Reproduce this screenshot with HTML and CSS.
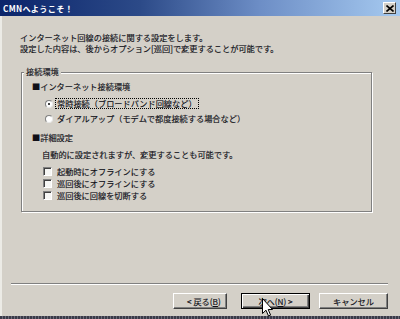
FILE: index.html
```html
<!DOCTYPE html>
<html lang="ja">
<head>
<meta charset="utf-8">
<title>CMNへようこそ！</title>
<link rel="stylesheet" href="styles.css">
</head>
<body>
<div class="window">
  <div class="titlebar">
    <span class="title">CMNへようこそ！</span>
    <span class="close"><svg width="8" height="7" viewBox="0 0 8 7"><path d="M0.5 0.5 L7.5 6.5 M7.5 0.5 L0.5 6.5" stroke="#000" stroke-width="1.6"/></svg></span>
  </div>
  <div class="intro">
    <p>インターネット回線の接続に関する設定をします。</p>
    <p>設定した内容は、後からオプション[巡回]で変更することが可能です。</p>
  </div>
  <div class="group">
    <div class="group-title">接続環境</div>
    <div class="heading">■インターネット接続環境</div>
    <div class="radios">
      <div class="option"><span class="radio checked"></span><span class="label focus">常時接続（ブロードバンド回線など）</span></div>
      <div class="option"><span class="radio"></span><span class="label">ダイアルアップ（モデムで都度接続する場合など）</span></div>
    </div>
    <div class="heading heading-2">■詳細設定</div>
    <div class="desc">自動的に設定されますが、変更することも可能です。</div>
    <div class="checks">
      <div class="check-row"><span class="checkbox"></span><span class="label">起動時にオフラインにする</span></div>
      <div class="check-row"><span class="checkbox"></span><span class="label">巡回後にオフラインにする</span></div>
      <div class="check-row"><span class="checkbox"></span><span class="label">巡回後に回線を切断する</span></div>
    </div>
  </div>
  <div class="footer">
    <div class="separator"></div>
    <div class="buttons">
      <span class="btn btn-back">&lt; 戻る(<u>B</u>)</span>
      <span class="btn btn-next btn-default">次へ(<u>N</u>) &gt;</span>
      <span class="btn btn-cancel">キャンセル</span>
    </div>
  </div>
  <svg class="cursor" width="11" height="19" viewBox="0 0 11 19"><path d="M0.5 0.5 L0.5 15.5 L4 12.2 L6.5 18 L8.6 17.1 L6.2 11.5 L10.5 11.5 Z" fill="#fff" stroke="#000" stroke-width="1"/></svg>
</div>
</body>
</html>
```
FILE: styles.css
```css
* {
  box-sizing: border-box;
  margin: 0;
  padding: 0;
}

html,
body {
  width: 400px;
  height: 319px;
  overflow: hidden;
}

body {
  background-color: #42424e;
  background-image: repeating-linear-gradient(90deg, #3a3a48 0 2px, #6c6c7a 2px 3px);
  font-family: "Noto Sans CJK JP", "Noto Sans", sans-serif;
  font-size: 8.2px;
  color: #101018;
  -webkit-text-stroke: 0.15px #101018;
}

.window {
  position: relative;
  height: 316px;
  background: #d4d0c8;
  box-shadow: inset 2px 0 0 #ecebe6;
  display: flex;
  flex-direction: column;
}

.titlebar {
  height: 16px;
  display: flex;
  align-items: center;
  justify-content: space-between;
  padding: 0 4px 0 3px;
  background: linear-gradient(90deg, #0a246a 0%, #2c4a88 35%, #6d8ec6 65%, #a6caf0 100%);
}

.title {
  color: #fff;
  -webkit-text-stroke: 0;
  font-weight: 700;
  line-height: 1;
  letter-spacing: 0.3px;
}

.close {
  width: 13px;
  height: 12px;
  background: #d4d0c8;
  border: 1px solid;
  border-color: #fff #404040 #404040 #fff;
  display: flex;
  align-items: center;
  justify-content: center;
}

.close svg {
  display: block;
}

.intro {
  padding: 16px 0 0 20px;
  line-height: 10.5px;
}

.group {
  margin: 18.75px 28px 0 21px;
  padding: 0 0 9px 10px;
  border: 1px solid #808080;
  box-shadow: inset 1px 1px 0 #fff, 1px 1px 0 #fff;
}

.group-title {
  width: fit-content;
  margin: -6.5px 0 0 -8px;
  padding: 0 2px;
  line-height: 11px;
  background: #d4d0c8;
}

.heading {
  margin-top: 3.75px;
  line-height: 11px;
}

.radios {
  margin-top: 4px;
  padding-left: 13px;
}

.option {
  height: 15px;
  display: flex;
  align-items: center;
}

.radio {
  width: 8px;
  height: 8px;
  margin-right: 2px;
  border-radius: 50%;
  background: #fff;
  border: 1px solid;
  border-color: #808080 #e8e8e8 #e8e8e8 #808080;
  display: flex;
  align-items: center;
  justify-content: center;
}

.radio.checked::after {
  content: "";
  width: 2px;
  height: 2px;
  border-radius: 50%;
  background: #000;
}

.label {
  line-height: 9px;
  padding: 0 1px;
  border: 1px solid transparent;
}

.label.focus {
  border: 1px dotted #000;
}

.heading-2 {
  margin-top: 6px;
}

.desc {
  margin-top: 6px;
  padding-left: 10px;
  line-height: 11px;
}

.checks {
  margin-top: 5.5px;
  padding-left: 11px;
}

.check-row {
  height: 12px;
  display: flex;
  align-items: center;
}

.checkbox {
  width: 9px;
  height: 9px;
  margin-right: 3px;
  background: #f6f6f4;
  border: 1px solid;
  border-color: #808080 #fff #fff #808080;
  box-shadow: inset 1px 1px 0 #404040;
}

.footer {
  margin-top: auto;
  padding-bottom: 7px;
}

.separator {
  margin: 0 12px 0 11px;
  height: 2px;
  border-top: 1px solid #808080;
  border-bottom: 1px solid #fff;
}

.buttons {
  margin-top: 8px;
  padding-right: 12px;
  display: flex;
  justify-content: flex-end;
}

.btn {
  height: 16px;
  width: 69px;
  display: flex;
  align-items: center;
  justify-content: center;
  line-height: 1;
  border: 1px solid;
  border-color: #fff #404040 #404040 #fff;
  box-shadow: inset -1px -1px 0 #808080;
}

.btn-back {
  width: 54px;
  margin-right: 14px;
  justify-content: flex-start;
  padding-left: 13px;
}

.btn-default {
  border-color: #000;
  box-shadow: inset 1px 1px 0 #fff, inset -1px -1px 0 #404040, inset -2px -2px 0 #808080;
}

.btn-cancel {
  margin-left: 9px;
}

.btn u {
  text-decoration: underline;
  text-underline-offset: 1px;
}

.cursor {
  position: absolute;
  left: 262px;
  top: 298px;
}
```
